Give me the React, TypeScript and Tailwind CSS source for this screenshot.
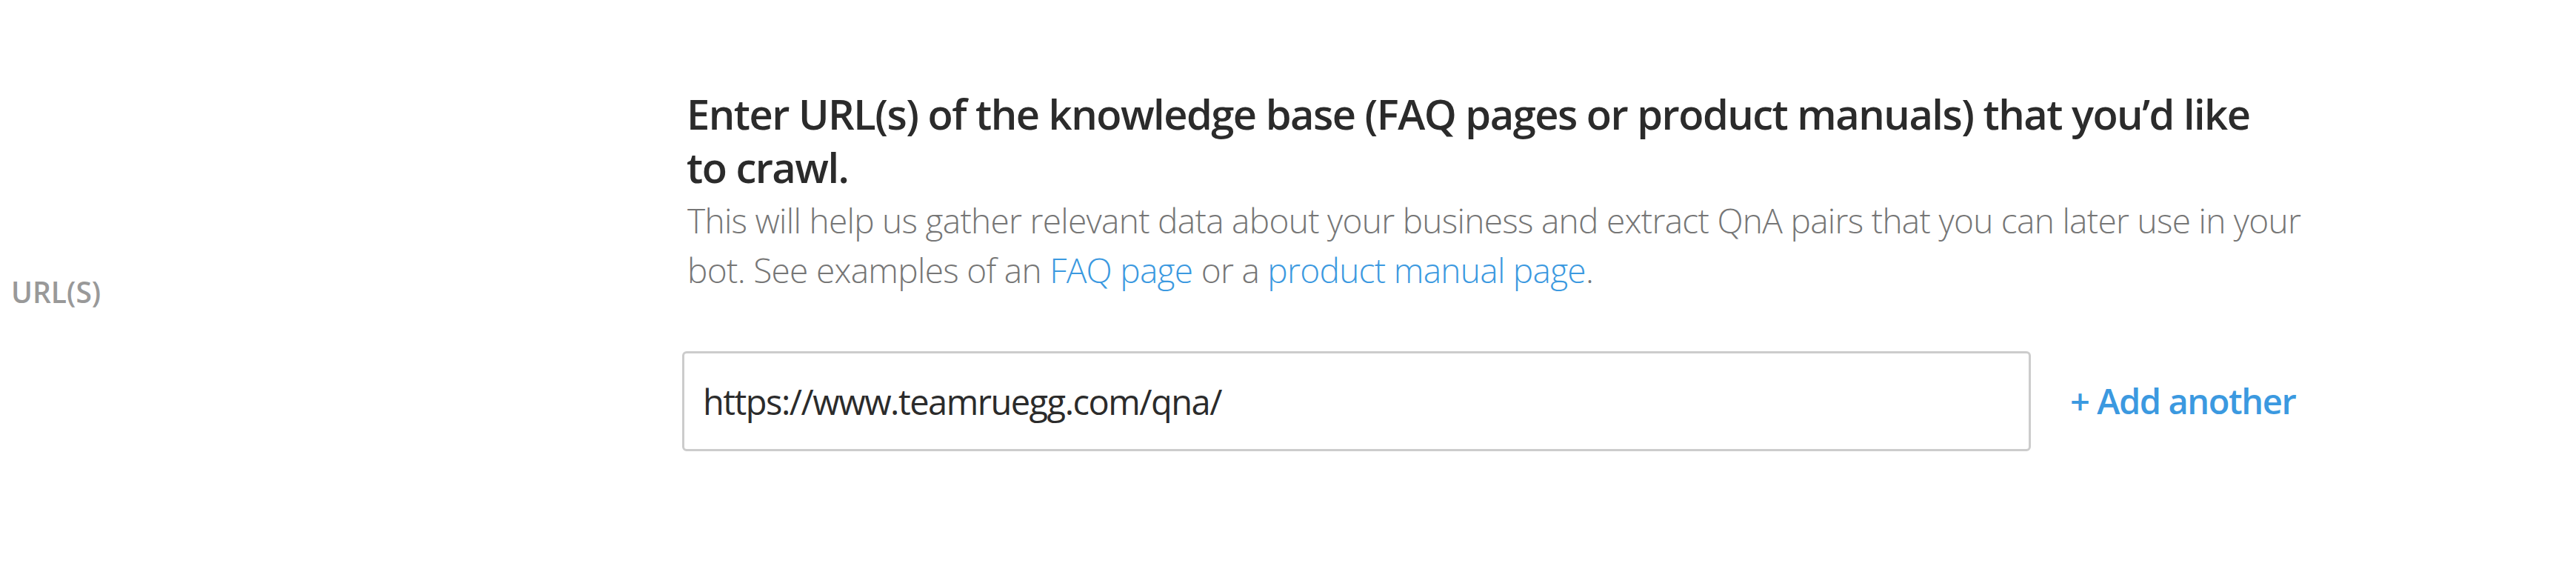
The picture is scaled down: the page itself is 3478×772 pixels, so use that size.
import React, { useState } from 'react';

function App() {
  const [urls, setUrls] = useState(['https://www.teamruegg.com/qna/']);

  const addAnother = () => setUrls([...urls, '']);

  return (
    <div className="w-[3478px] h-[772px] bg-white font-['Open_Sans','Noto_Sans',sans-serif]">
      <div className="flex items-center pt-[117px]">
        <div className="w-[921px] pl-[15px] shrink-0">
          <div className="text-[39px] leading-none font-semibold text-[#999999]">URL(S)</div>
        </div>

        <div className="w-[2260px] pb-[60px]">
          <h2 className="text-[56px] leading-[72px] font-semibold text-[#2b2b2b] pl-[6px] tracking-[-1.5px]">
            Enter URL(s) of the knowledge base (FAQ pages or product manuals) that you’d like
            <br />
            to crawl.
          </h2>
          <p className="mt-[3px] text-[46px] leading-[67px] font-light text-[#767676] pl-[7px] tracking-[-0.7px]">
            This will help us gather relevant data about your business and extract QnA pairs that you can later use in your
            <br />
            bot. See examples of an <a href="#faq" className="text-[#3b99e0]">FAQ page</a> or a{' '}
            <a href="#manual" className="text-[#3b99e0]">product manual page</a>.
          </p>

          <div className="mt-[76px] flex flex-col gap-[24px]">
            {urls.map((u, i) => (
              <div key={i} className="flex items-center">
                <input
                  type="text"
                  value={u}
                  onChange={(e) => {
                    const next = [...urls];
                    next[i] = e.target.value;
                    setUrls(next);
                  }}
                  className="w-[1821px] h-[135px] shrink-0 border-[3px] border-[#cccccc] rounded-[6px] px-[25px] text-[47px] text-[#2b2b2b] outline-none tracking-[-1.5px]"
                />
                {i === 0 && (
                  <button
                    onClick={addAnother}
                    className="ml-[53px] text-[47px] font-semibold text-[#3b99e0] tracking-[-1.4px] whitespace-nowrap"
                  >
                    + Add another
                  </button>
                )}
              </div>
            ))}
          </div>
        </div>
      </div>
    </div>
  );
}

export default App;
